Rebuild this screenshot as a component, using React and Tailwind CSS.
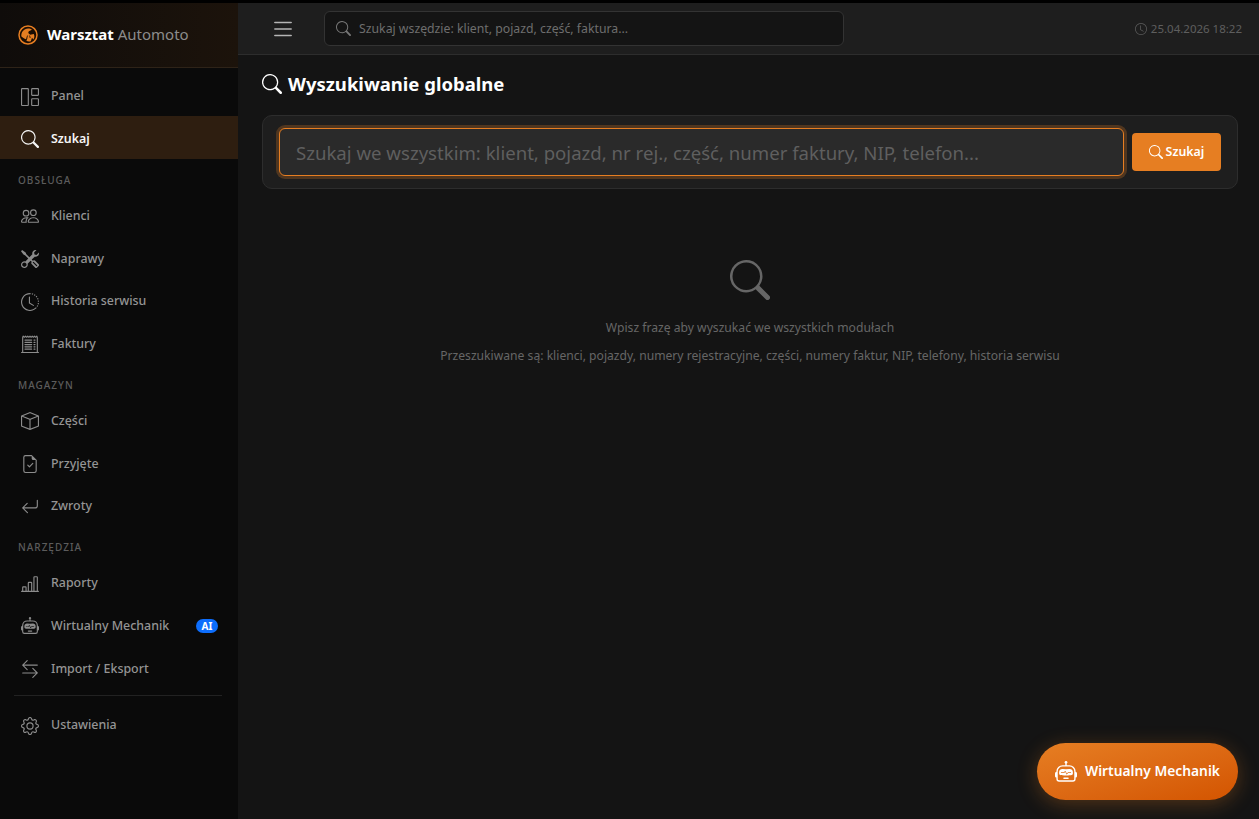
import React from "react";
import {
  BsGrid1X2,
  BsSearch,
  BsPeople,
  BsTools,
  BsClockHistory,
  BsReceiptCutoff,
  BsBox,
  BsFileEarmarkCheck,
  BsArrowReturnLeft,
  BsBarChartLine,
  BsRobot,
  BsArrowLeftRight,
  BsGear,
  BsList,
  BsClock,
} from "react-icons/bs";

const Logo = () => (
  <svg viewBox="0 0 20 20" className="h-5 w-5 shrink-0">
    <circle cx="10" cy="10" r="9" fill="#1a0d03" stroke="#e67e22" strokeWidth="1.5" />
    <path
      d="M3.4 11.5C2.8 7.2 6 3.6 10 3.5c1.8 0 3.1.4 4 1.3l-3.2 1.5-.6 1.8 2 1.6 3.6-.8c.9 1.8.7 3.9-.4 5.5l-1.4-1.6-1.2 3.4c-1.8.5-3.3.2-4.4-.4l1.2-3.3-2 1.8c-1.4-.6-3-1.6-4.2-2.8z"
      fill="#e67e22"
    />
    <path d="M9.6 10.5l-1 3M11.6 10.5l.6 2.5" stroke="#1a0d03" strokeWidth="0.8" fill="none" />
  </svg>
);

const NavItem = ({ icon: Icon, label, active, badge }) => (
  <a
    className={`flex h-[42.67px] items-center gap-[12px] pt-[3px] pr-[20px] pl-[21px] text-[12.4px] font-medium ${
      active ? "bg-[#2e1e10] font-semibold text-[#f5f5f5]" : "text-[#949494]"
    }`}
  >
    <Icon className={`h-[18px] w-[18px] shrink-0 ${active ? "text-[#f5f5f5]" : "text-[#8c8c8c]"}`} />
    <span className="flex-1">{label}</span>
    {badge && (
      <span className="flex h-[14px] w-[22px] items-center justify-center rounded-full bg-[#0d6efd] text-[10px] font-bold text-white">
        {badge}
      </span>
    )}
  </a>
);

const SectionLabel = ({ children }) => (
  <div className="flex h-[34.4px] items-center pt-[8px] pl-[18px] text-[10px] font-medium tracking-[1px] text-[#5c5c5c] uppercase">
    {children}
  </div>
);

export default function App() {
  return (
    <div className="flex h-[819px] w-full flex-col overflow-hidden bg-black font-['Noto_Sans',sans-serif]">
      <div className="h-[3px] shrink-0 bg-black" />
      <div className="flex min-h-0 flex-1">
        {/* Sidebar */}
        <aside className="w-[238px] shrink-0 bg-[#0a0a0a]">
          <div className="flex h-[65px] items-center gap-[9px] border-b border-[#2e2318] bg-gradient-to-r from-[#0f0c0a] to-[#1c130b] pl-[18px]">
            <Logo />
            <div className="pb-[2px] text-[15px] font-bold text-white">
              Warsztat <span className="font-normal text-[#8c8c8c]">Automoto</span>
            </div>
          </div>
          <nav className="pt-[5.7px]">
            <NavItem icon={BsGrid1X2} label="Panel" />
            <NavItem icon={BsSearch} label="Szukaj" active />
            <SectionLabel>Obsługa</SectionLabel>
            <NavItem icon={BsPeople} label="Klienci" />
            <NavItem icon={BsTools} label="Naprawy" />
            <NavItem icon={BsClockHistory} label="Historia serwisu" />
            <NavItem icon={BsReceiptCutoff} label="Faktury" />
            <SectionLabel>Magazyn</SectionLabel>
            <NavItem icon={BsBox} label="Części" />
            <NavItem icon={BsFileEarmarkCheck} label="Przyjęte" />
            <NavItem icon={BsArrowReturnLeft} label="Zwroty" />
            <SectionLabel>Narzędzia</SectionLabel>
            <NavItem icon={BsBarChartLine} label="Raporty" />
            <NavItem icon={BsRobot} label="Wirtualny Mechanik" badge="AI" />
            <NavItem icon={BsArrowLeftRight} label="Import / Eksport" />
            <div className="mt-[6px] mr-[16px] mb-[7px] ml-[14px] h-px bg-[#222222]" />
            <NavItem icon={BsGear} label="Ustawienia" />
          </nav>
        </aside>

        {/* Main */}
        <div className="relative flex min-w-0 flex-1 flex-col bg-[#141414]">
          <header className="flex h-[52px] shrink-0 items-center border-b border-[#2d2d2d] bg-[#1e1e1e] pr-[17px] pl-[32px]">
            <BsList className="h-[26px] w-[26px] text-[#b5b5b5]" />
            <div className="ml-[28px] flex h-[35px] w-[520px] items-center gap-[8px] rounded-[6px] border border-[#333333] bg-[#141414] pl-[11px]">
              <BsSearch className="h-[15px] w-[15px] text-[#777777]" />
              <span className="pt-[2px] text-[12.27px] text-[#6e6e6e]">Szukaj wszędzie: klient, pojazd, część, faktura...</span>
            </div>
            <div className="ml-auto flex items-center gap-[4px] text-[11.5px] text-[#5e5e5e]">
              <BsClock className="h-[12px] w-[12px]" />
              25.04.2026 18:22
            </div>
          </header>

          <main className="min-h-0 flex-1 pt-[17px] pr-[21px] pl-[24px]">
            <h1 className="flex items-center gap-[6px] text-[18.5px] leading-[24px] font-bold text-white">
              <BsSearch className="h-[20px] w-[20px]" />
              Wyszukiwanie globalne
            </h1>
            <div className="mt-[19px] flex h-[74px] items-center gap-[8px] rounded-[10px] border border-[#2d2d2d] bg-[#1e1e1e] pr-[16px] pl-[16px]">
              <div className="flex h-[48px] flex-1 items-center rounded-[6px] border border-[#e67e22] bg-[#2a2a2a] pl-[16px] shadow-[0_0_0_3px_rgba(230,126,34,0.25)]">
                <span className="pt-[2px] text-[18.6px] text-[#5f5f5f]">Szukaj we wszystkim: klient, pojazd, nr rej., część, numer faktury, NIP, telefon...</span>
              </div>
              <button className="flex h-[38px] w-[89px] items-center justify-center gap-[3px] rounded-[4px] bg-[#e67e22] text-[12.4px] font-semibold text-white">
                <BsSearch className="h-[14px] w-[14px]" />
                Szukaj
              </button>
            </div>

            <div className="mt-[71px] flex flex-col items-center text-[12.15px] text-[#666666]">
              <BsSearch className="h-[40px] w-[40px] text-[#666666]" />
              <p className="mt-[19px]">Wpisz frazę aby wyszukać we wszystkich modułach</p>
              <p className="mt-[10px]">Przeszukiwane są: klienci, pojazdy, numery rejestracyjne, części, numery faktur, NIP, telefony, historia serwisu</p>
            </div>
          </main>

          <button className="absolute right-[21px] bottom-[19px] flex h-[57px] w-[201px] items-center justify-center gap-[8px] rounded-full bg-gradient-to-br from-[#e67e22] to-[#d35400] text-[13.8px] font-semibold text-white shadow-[0_4px_20px_rgba(230,126,34,0.3)]">
            <BsRobot className="h-[22px] w-[22px]" />
            Wirtualny Mechanik
          </button>
        </div>
      </div>
    </div>
  );
}
